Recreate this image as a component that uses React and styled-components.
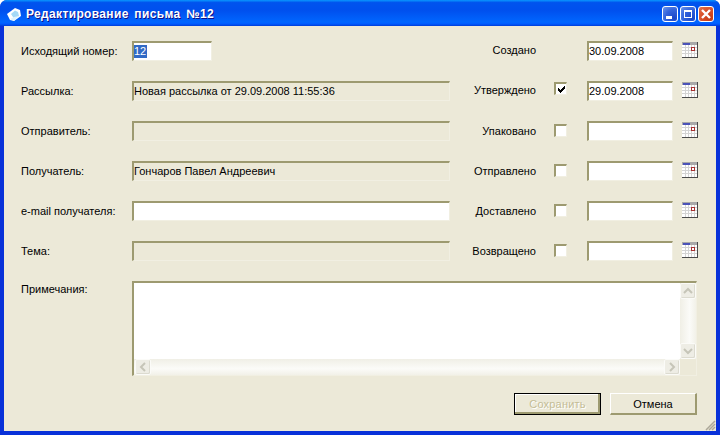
import React from "react";
import styled, { createGlobalStyle } from "styled-components";

const GlobalStyle = createGlobalStyle`
  html, body {
    margin: 0;
    padding: 0;
    background: #fff;
  }
  * {
    box-sizing: border-box;
  }
`;

const Win = styled.div`
  width: 720px;
  height: 435px;
  display: flex;
  flex-direction: column;
  border-radius: 7px 7px 0 0;
  overflow: hidden;
  background: #0831d9;
  font-family: "Liberation Sans", Arial, sans-serif;
  font-size: 11px;
  color: #000;
`;

const TitleBar = styled.div`
  height: 26px;
  flex: none;
  display: flex;
  align-items: center;
  padding: 2px 6px 0 7px;
  background: linear-gradient(180deg, #0997ff 0, #0053ee 10%, #0050ee 40%, #0066ff 85%, #005bff 92%, #003dd7 100%);
`;

const TitleText = styled.div`
  margin-left: 4px;
  flex: 1;
  color: #fff;
  font-size: 12px;
  font-weight: bold;
  letter-spacing: 0.35px;
  word-spacing: 2px;
  text-shadow: 1px 1px 0 #0f1089;
`;

const WinButton = styled.div`
  width: 16px;
  height: 16px;
  margin-left: 2px;
  border: 1px solid #fff;
  border-radius: 3px;
  display: flex;
  align-items: center;
  justify-content: center;
  background: ${(p) =>
    p.$close
      ? "radial-gradient(circle at 80% 80%, #c43a14 0, #d9512a 55%, #e2764f 100%)"
      : "radial-gradient(circle at 80% 80%, #1c46c8 0, #3464dc 55%, #6f96ea 100%)"};
`;

const Client = styled.div`
  flex: 1;
  margin: 0 4px 4px;
  position: relative;
  background: #ece9d8;
  padding: 15px 0 0 17px;
  display: flex;
  flex-direction: column;
`;

const Rows = styled.div`
  display: flex;
  flex-direction: column;
  gap: 20px;
`;

const Row = styled.div`
  height: 20px;
  display: flex;
  align-items: center;
`;

const LeftPart = styled.div`
  width: 429px;
  display: flex;
  align-items: center;
`;

const Label = styled.div`
  width: 111px;
  flex: none;
`;

const Field = styled.div`
  width: ${(p) => p.$w || 318}px;
  height: 20px;
  flex: none;
  padding: 1px 0 0 0;
  line-height: 14px;
  white-space: nowrap;
  background: ${(p) => (p.$off ? "#ece9d8" : "#fff")};
  border-style: solid;
  border-width: 2px 1px 1px 2px;
  border-color: #9d9a70 #f1efe2 #f1efe2 #9d9a70;
`;

const Selected = styled.span`
  display: inline-block;
  padding: 0 1px 0 0;
  background: #316ac5;
  color: #fff;
  line-height: 13px;
`;

const StatusLabel = styled.div`
  width: 86px;
  flex: none;
  text-align: right;
  padding-bottom: ${(p) => (p.$up ? 2 : 0)}px;
`;

const CheckSlot = styled.div`
  width: 51px;
  flex: none;
  align-self: flex-start;
  padding-left: 18px;
  padding-top: ${(p) => (p.$raised ? 1 : 3)}px;
`;

const Check = styled.div`
  width: 13px;
  height: 13px;
  background: #fff;
  display: flex;
  align-items: center;
  justify-content: center;
  border-style: solid;
  border-width: 2px 1px 1px 2px;
  border-color: #9d9a70 #f1efe2 #f1efe2 #9d9a70;
`;

const CalIcon = styled.svg`
  margin: 0 0 3px 9px;
  flex: none;
`;

const NotesRow = styled.div`
  display: flex;
  margin-top: 20px;
`;

const NotesLabel = styled.div`
  width: 111px;
  flex: none;
  padding-top: 2px;
`;

const Notes = styled.div`
  width: 565px;
  height: 95px;
  display: grid;
  grid-template-columns: 1fr 16px;
  grid-template-rows: 1fr 16px;
  background: #fff;
  border-style: solid;
  border-width: 2px 1px 1px 2px;
  border-color: #9d9a70 #f1efe2 #f1efe2 #9d9a70;
`;

const NotesText = styled.div`
  background: #fff;
`;

const ScrollV = styled.div`
  display: flex;
  flex-direction: column;
  justify-content: space-between;
  background: linear-gradient(90deg, #f0efe6, #fbfbf8 60%, #f2f1e8);
`;

const ScrollH = styled.div`
  display: flex;
  justify-content: space-between;
  padding-left: 1px;
  background: linear-gradient(180deg, #f0efe6, #fbfbf8 60%, #f2f1e8);
`;

const Corner = styled.div`
  background: #ece9d8;
`;

const ScrollBtn = styled.div`
  width: 16px;
  height: 16px;
  display: flex;
  align-items: center;
  justify-content: center;
  background: #eeede5;
  border: 1px solid #fbfbf8;
  border-radius: 2px;
  box-shadow: inset -1px -1px 0 #dcdbd0;
`;

const Footer = styled.div`
  display: flex;
  justify-content: flex-end;
  gap: 9px;
  margin: 17px 19px 0 0;
`;

const Btn = styled.div`
  width: 87px;
  height: 22px;
  display: flex;
  align-items: center;
  justify-content: center;
  background: #ece9d8;
  color: ${(p) => (p.$off ? "#c4bd96" : "#000")};
  letter-spacing: ${(p) => (p.$off ? "0.2px" : "0")};
  text-shadow: ${(p) => (p.$off ? "1px 1px 0 #fff" : "none")};
  border-style: solid;
  border-color: ${(p) => (p.$off ? "#000" : "#fff #9d9a70 #9d9a70 #fff")};
  border-width: ${(p) => (p.$off ? "1px" : "1px 2px 2px 1px")};
  box-shadow: ${(p) => (p.$off ? "inset -2px -2px 0 #9d9a70, inset 1px 1px 0 #fff" : "none")};
`;

const Grip = styled.svg`
  position: absolute;
  right: 0;
  bottom: 0;
`;

function Logo() {
  return (
    <svg width="15" height="15" viewBox="0 0 15 15">
      <path d="M0 7 L8 1 L13 3 L14 9 L7 14 L3 13 Z" fill="#fff" />
      <path d="M4 7 L8 3.5 L11 5 L12 9 L7 11.5 Z" fill="#a5d9f6" />
      <path d="M3 12 L7 10 L12 9 L7 14 Z" fill="#dff2fc" />
    </svg>
  );
}

function Calendar() {
  return (
    <CalIcon width="16" height="16" viewBox="0 0 16 16" shapeRendering="crispEdges">
      <rect x="0" y="0" width="16" height="16" fill="#4b4b4b" />
      <rect x="0" y="0" width="15" height="15" fill="#fff" />
      <rect x="0" y="0" width="15" height="3" fill="#a9a9a9" />
      <rect x="1" y="1" width="7" height="2" fill="#4a52b8" />
      <path d="M3.5 3V15M6.5 3V15M9.5 3V15M12.5 3V15M0 5.5H15M0 8.5H15M0 11.5H15" stroke="#d4d4d4" strokeWidth="1" />
      <rect x="9.5" y="5.5" width="3" height="3" fill="#fff" stroke="#a83232" strokeWidth="1" />
    </CalIcon>
  );
}

function CheckMark() {
  return (
    <svg width="7" height="7" viewBox="0 0 7 7" shapeRendering="crispEdges">
      <path d="M0 2h1v3H0zM1 3h1v3H1zM2 4h1v3H2zM3 3h1v3H3zM4 2h1v3H4zM5 1h1v3H5zM6 0h1v3H6z" fill="#000" />
    </svg>
  );
}

function Chevron({ dir }) {
  const paths = {
    up: "M1 6 L5 2 L9 6",
    down: "M1 2 L5 6 L9 2",
    left: "M6 1 L2 5 L6 9",
    right: "M2 1 L6 5 L2 9",
  };
  const horizontal = dir === "left" || dir === "right";
  return (
    <svg
      width={horizontal ? 8 : 10}
      height={horizontal ? 10 : 8}
      viewBox={horizontal ? "0 0 8 10" : "0 0 10 8"}
    >
      <path d={paths[dir]} fill="none" stroke="#c6c5b8" strokeWidth="2" />
    </svg>
  );
}

const statuses = [
  { label: "Создано", date: "30.09.2008", noCheck: true, up: true },
  { label: "Утверждено", date: "29.09.2008", checked: true, up: true },
  { label: "Упаковано" },
  { label: "Отправлено" },
  { label: "Доставлено" },
  { label: "Возвращено" },
];

const leftFields = [
  { label: "Исходящий номер:", selected: "12", w: 80 },
  { label: "Рассылка:", value: "Новая рассылка от 29.09.2008 11:55:36", off: true },
  { label: "Отправитель:", value: "", off: true },
  { label: "Получатель:", value: "Гончаров Павел Андреевич", off: true },
  { label: "e-mail получателя:", value: "" },
  { label: "Тема:", value: "", off: true },
];

export default function App() {
  return (
    <Win>
      <GlobalStyle />
      <TitleBar>
        <Logo />
        <TitleText>Редактирование письма №12</TitleText>
        <WinButton>
          <svg width="10" height="10" viewBox="0 0 10 10">
            <rect x="1" y="7" width="6" height="3" fill="#fff" />
          </svg>
        </WinButton>
        <WinButton>
          <svg width="10" height="10" viewBox="0 0 10 10">
            <path d="M1 1H9V9H1Z M2 3V8H8V3Z" fill="#fff" fillRule="evenodd" />
          </svg>
        </WinButton>
        <WinButton $close>
          <svg width="10" height="10" viewBox="0 0 10 10">
            <path d="M1 1L9 9M9 1L1 9" stroke="#fff" strokeWidth="2.4" />
          </svg>
        </WinButton>
      </TitleBar>
      <Client>
        <Rows>
          {leftFields.map((f, i) => {
            const s = statuses[i];
            return (
              <Row key={f.label}>
                <LeftPart>
                  <Label>{f.label}</Label>
                  <Field $w={f.w} $off={f.off}>
                    {f.selected ? <Selected>{f.selected}</Selected> : f.value}
                  </Field>
                </LeftPart>
                <StatusLabel $up={s.up}>{s.label}</StatusLabel>
                <CheckSlot $raised={s.checked}>
                  {!s.noCheck && <Check>{s.checked && <CheckMark />}</Check>}
                </CheckSlot>
                <Field $w={86}>{s.date}</Field>
                <Calendar />
              </Row>
            );
          })}
        </Rows>
        <NotesRow>
          <NotesLabel>Примечания:</NotesLabel>
          <Notes>
            <NotesText />
            <ScrollV>
              <ScrollBtn><Chevron dir="up" /></ScrollBtn>
              <ScrollBtn><Chevron dir="down" /></ScrollBtn>
            </ScrollV>
            <ScrollH>
              <ScrollBtn><Chevron dir="left" /></ScrollBtn>
              <ScrollBtn><Chevron dir="right" /></ScrollBtn>
            </ScrollH>
            <Corner />
          </Notes>
        </NotesRow>
        <Footer>
          <Btn $off>Сохранить</Btn>
          <Btn>Отмена</Btn>
        </Footer>
        <Grip width="12" height="12" viewBox="0 0 12 12">
          <path d="M11 2L2 11M11 5L5 11M11 8L8 11" stroke="#aca899" strokeWidth="1.5" />
        </Grip>
      </Client>
    </Win>
  );
}
